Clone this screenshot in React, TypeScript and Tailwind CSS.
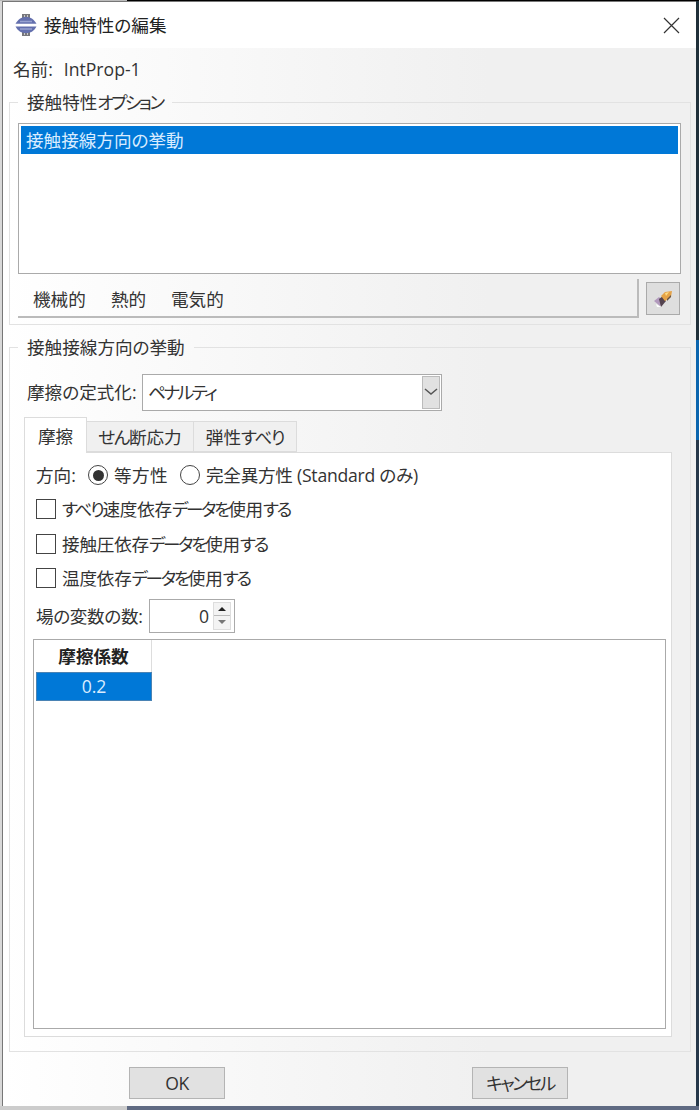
import { useState } from 'react';

const menus = [
  { label: '機械的', className: 'ml-[15px] w-[78px]' },
  { label: '熱的', className: 'w-[60px]' },
  { label: '電気的', className: 'w-[60px]' },
];

const tabs = [
  { label: '摩擦', className: 'w-[63px]' },
  { label: 'せん断応力', className: 'w-[107px]' },
  { label: '弾性すべり', className: 'w-[103px]' },
];

const options = [
  'すべり速度依存データを使用する',
  '接触圧依存データを使用する',
  '温度依存データを使用する',
];

// Kana is set tighter than kanji in dialog labels
function Label({ text, tight = 'tracking-[-1.5px]' }: { text: string; tight?: string }) {
  return (
    <span>
      {text.split(/([ぁ-んァ-ヶー]{2,})/).map((part, i) =>
        i % 2 === 1 ? <span key={i} className={tight}>{part}</span> : part
      )}
    </span>
  );
}

function AppIcon() {
  return (
    <svg width="22" height="22" viewBox="0 0 22 22" className="shrink-0">
      <path d="M7 0h8v4H7zM7 18h8v4H7z" fill="#77777c" />
      <path d="M9 1h1v3H9zM12 1h1v3h-1zM9 18h1v3H9zM12 18h1v3h-1z" fill="#c9c9cd" />
      <path d="M0.5 9.700C3 5.500 6 3 11 3s8 2.500 10.500 6.700z" fill="#6470ae" />
      <path d="M0.500 12.500C3 17 6 19 11 19s8-2 10.500-6.500z" fill="#6470ae" />
      <path d="M5 7.500h12M5 15h12" stroke="#98a2d0" strokeWidth="1.500" />
    </svg>
  );
}

function EraserIcon() {
  return (
    <svg width="20" height="20" viewBox="0 0 20 20">
      <path d="M1 12L6 8l5 5-4 4z" fill="#b29abd" />
      <path d="M6 10l4-3 3 5-5 6z" fill="#54434f" />
      <path d="M8 7l4-4 7-1-1 6-6 4z" fill="#e5a348" />
      <path d="M12 4l4-1-3 4z" fill="#ffdc83" />
      <path d="M14 10l4-4v2l-4 4z" fill="#675346" />
      <path d="M3 15l5 3H4z" fill="#fff" />
    </svg>
  );
}

export default function App() {
  const [activeTab, setActiveTab] = useState(0);
  const [direction, setDirection] = useState(0);
  const [checked, setChecked] = useState([false, false, false]);

  const toggle = (index: number) => {
    setChecked(checked.map((value, i) => (i === index ? !value : value)));
  };

  return (
    <div className="flex h-[1110px] w-[699px] flex-col overflow-hidden bg-[#f3f3f3] font-['Open_Sans','Noto_Sans_CJK_JP',sans-serif] text-[17.6px] leading-6 text-[#333] [font-feature-settings:'palt']">
      <div className="flex h-px shrink-0">
        <div className="w-[127px] bg-[#bbb]" />
        <div className="flex-1 bg-black" />
      </div>

      <div className="flex h-[1105px] shrink-0">
        <div className="w-[2px] bg-[#d8d8d8]" />
        <div className="flex w-[694px] flex-col border-t border-l border-[#777] bg-linear-to-r from-white to-[#f0f0f0] to-70%">
          <div className="flex h-[46px] shrink-0 items-center bg-white pl-[12px]">
            <AppIcon />
            <span className="ml-[7px] text-[17.6px] text-[#222]">接触特性の編集</span>
            <button className="mr-[16px] ml-auto" aria-label="閉じる">
              <svg width="17" height="17" viewBox="0 0 17 17" fill="none" stroke="#333" strokeWidth="1.200">
                <path d="M1 1l15 15M16 1L1 16" />
              </svg>
            </button>
          </div>

          <div className="flex h-[42px] shrink-0 items-center pl-[10px]">
            <span>名前:</span>
            <span className="ml-[11px]">IntProp-1</span>
          </div>

          <fieldset className="mr-[5px] ml-[6px] h-[235px] shrink-0 border border-[#e2e2e2]">
            <legend className="ml-[8px] h-6 px-[9px]">
              <Label text="接触特性オプション" tight="tracking-[-2.4px]" />
            </legend>
            <div className="mt-[9px] ml-[8px] h-[151px] w-[663px] border border-[#aaa] bg-white p-[2px]">
              <div className="flex h-[28px] items-center bg-[#0078d7] pl-[5px] text-[#d9ecff]">接触接線方向の挙動</div>
            </div>
            <div className="mt-[5px] ml-[8px] flex h-[39px]">
              <div className="flex w-[621px] items-center border-r-2 border-b-2 border-[#bbb] pt-[2px]">
                {menus.map((menu) => (
                  <button key={menu.label} className={`text-left ${menu.className}`}>{menu.label}</button>
                ))}
              </div>
              <button className="mt-[3px] ml-[7px] flex h-[33px] w-[34px] items-center justify-center border border-[#aaa] bg-[#dedede]" aria-label="削除">
                <EraserIcon />
              </button>
            </div>
          </fieldset>

          <fieldset className="mt-[10px] mr-[5px] ml-[6px] h-[717px] shrink-0 border border-[#e2e2e2]">
            <legend className="ml-[8px] h-6 px-[9px]">接触接線方向の挙動</legend>
            <div className="mt-[14px] ml-[17px] flex h-[38px] items-center">
              <span className="w-[115px] shrink-0">摩擦の定式化:</span>
              <div className="flex h-[37px] w-[300px] items-center border border-[#aaa] bg-white pl-[5px]">
                <Label text="ペナルティ" tight="tracking-[-2.5px]" />
                <button className="mr-px ml-auto flex h-[33px] w-[18px] items-center justify-center border border-[#bbb] bg-[#e1e1e1]" aria-label="開く">
                  <svg width="14" height="8" viewBox="0 0 14 8" fill="none" stroke="#555" strokeWidth="1.500">
                    <path d="M1 1l6 5 6-5" />
                  </svg>
                </button>
              </div>
            </div>

            <div className="mt-[6px] ml-[14px] flex h-[35px] items-end">
              {tabs.map((tab, i) => (
                <button
                  key={tab.label}
                  onClick={() => setActiveTab(i)}
                  className={`border border-[#dcdcdc] ${tab.className} ${
                    activeTab === i ? 'z-10 -mb-px h-[36px] border-b-0 bg-white' : 'h-[31px] border-l-0 bg-[#f0f0f0]'
                  }`}
                >
                  <Label text={tab.label} tight="tracking-[-1.4px]" />
                </button>
              ))}
            </div>

            <div className="ml-[14px] h-[585px] w-[648px] border border-[#dcdcdc] bg-white">
              <div className="mt-[6px] ml-[11px] flex h-[32px] items-center">
                <span className="w-[52px]">方向:</span>
                {['等方性', '完全異方性 (Standard のみ)'].map((label, i) => (
                  <label key={label} className="mr-[12px] flex items-center">
                    <input type="radio" className="sr-only" checked={direction === i} onChange={() => setDirection(i)} />
                    <span className="mr-[6px] flex size-[20px] items-center justify-center rounded-full border-[1.5px] border-[#444]">
                      {direction === i && <span className="size-[11px] rounded-full bg-[#333]" />}
                    </span>
                    <span className={i === 1 ? 'tracking-[-0.25px]' : 'tracking-[0.4px]'}>{label}</span>
                  </label>
                ))}
              </div>

              <div className="mt-px">
                {options.map((option, i) => (
                  <label key={option} className="ml-[11px] flex h-[34.5px] items-center tracking-[-0.2px]">
                    <input type="checkbox" className="sr-only" checked={checked[i]} onChange={() => toggle(i)} />
                    <span className="mr-[6px] flex size-[20px] items-center justify-center border-[1.5px] border-[#444]">
                      {checked[i] && <span className="size-[10px] bg-[#333]" />}
                    </span>
                    <Label text={option} tight="tracking-[-2.3px]" />
                  </label>
                ))}
              </div>

              <div className="mt-[3px] ml-[11px] flex h-[34px] items-center">
                <span className="w-[113px] shrink-0 tracking-[-0.35px]">場の変数の数:</span>
                <div className="flex h-[34px] w-[86px] items-center justify-end border border-[#aaa] bg-white pr-[3px]">
                  <span className="mr-[4px]">0</span>
                  <div className="flex h-[28px] w-[18px] flex-col border border-[#ddd] bg-[#f3f3f3]">
                    <button className="flex flex-1 items-center justify-center border-b border-[#bbb]" aria-label="増やす">
                      <svg width="10" height="6"><path d="M1 5l4-4 4 4z" fill="#222" /></svg>
                    </button>
                    <button className="flex flex-1 items-center justify-center" aria-label="減らす">
                      <svg width="10" height="6"><path d="M1 1l4 4 4-4z" fill="#777" /></svg>
                    </button>
                  </div>
                </div>
              </div>

              <div className="mt-[6px] ml-[8px] h-[390px] w-[633px] border border-[#aaa] pl-[2px]">
                <div className="flex h-[32px] w-[116px] items-center justify-center border-r border-[#ddd] font-semibold text-[#222]">摩擦係数</div>
                <div className="flex h-[29px] w-[116px] items-center justify-center border border-[#4a83b4] bg-[#0078d7] text-[#d9ecff]">0.2</div>
              </div>
            </div>
          </fieldset>

          <div className="mt-[15px] flex pl-[126px]">
            <button className="h-[32px] w-[96px] border border-[#b4b4b4] bg-[#e1e1e1] tracking-[-0.4px]">OK</button>
            <button className="ml-[247px] h-[32px] w-[96px] border border-[#b4b4b4] bg-[#e1e1e1]">
              <Label text="キャンセル" tight="tracking-[-2.4px]" />
            </button>
          </div>
        </div>
        <div className="flex w-[3px] flex-col">
          <div className="h-[339px] bg-[#20303a]" />
          <div className="h-[100px] bg-[#0b65ae]" />
          <div className="flex-1 bg-[#26384a]" />
        </div>
      </div>

      <div className="flex h-[4px]">
        <div className="w-[127px] bg-[#ccc]" />
        <div className="flex-1 bg-[#5f6a82]" />
      </div>
    </div>
  );
}
